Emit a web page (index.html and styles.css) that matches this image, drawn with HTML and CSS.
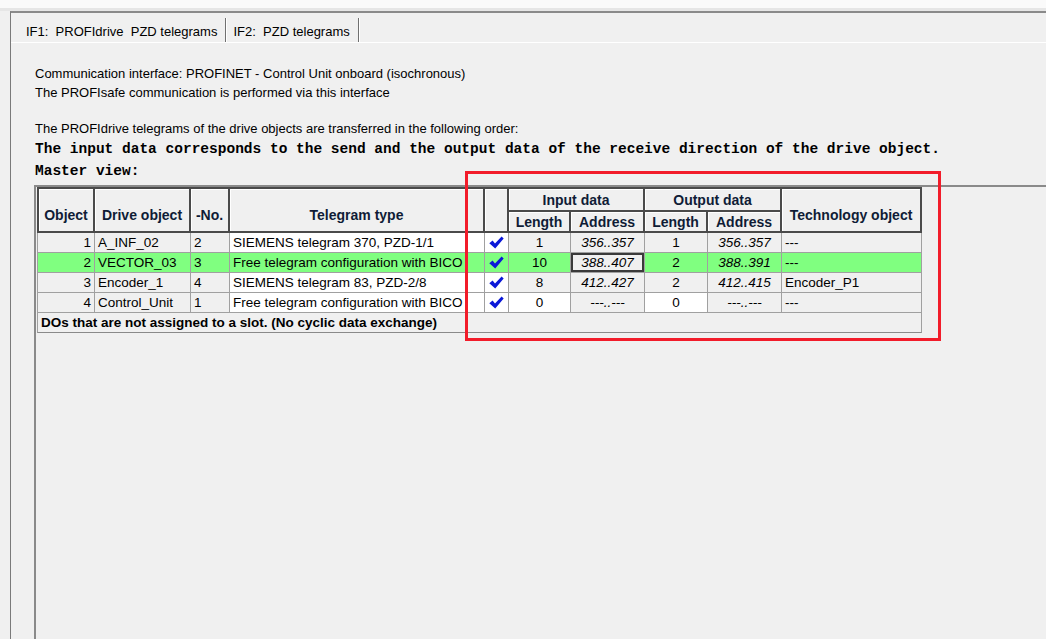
FILE: index.html
```html
<!DOCTYPE html>
<html lang="en">
<head>
<meta charset="utf-8">
<title>PROFIdrive PZD telegrams</title>
<link rel="stylesheet" href="styles.css">
</head>
<body>
<div class="topstrip"></div>
<div class="tabctl">
  <div class="tabs">
    <div class="tab tab-active">IF1:&nbsp; PROFIdrive&nbsp; PZD telegrams</div>
    <div class="tab">IF2:&nbsp; PZD telegrams</div>
  </div>
  <div class="panel">
    <div class="info">
      <p>Communication interface: PROFINET - Control Unit onboard (isochronous)</p>
      <p>The PROFIsafe communication is performed via this interface</p>
    </div>
    <p class="order">The PROFIdrive telegrams of the drive objects are transferred in the following order:</p>
    <p class="mono">The input data corresponds to the send and the output data of the receive direction of the drive object.</p>
    <p class="mono">Master view:</p>
    <div class="grid">
      <table class="tg">
        <colgroup>
          <col class="c-obj"><col class="c-drv"><col class="c-no"><col class="c-tel"><col class="c-chk">
          <col class="c-len"><col class="c-adr"><col class="c-len2"><col class="c-adr"><col class="c-tech">
        </colgroup>
        <thead>
          <tr class="h1">
            <th rowspan="2" class="first">Object</th>
            <th rowspan="2">Drive object</th>
            <th rowspan="2">-No.</th>
            <th rowspan="2">Telegram type</th>
            <th rowspan="2"></th>
            <th colspan="2">Input data</th>
            <th colspan="2">Output data</th>
            <th rowspan="2">Technology object</th>
          </tr>
          <tr class="h2">
            <th>Length</th><th>Address</th><th>Length</th><th>Address</th>
          </tr>
        </thead>
        <tbody>
          <tr>
            <td class="num first">1</td><td>A_INF_02</td><td>2</td><td class="w">SIEMENS telegram 370, PZD-1/1</td>
            <td class="chk w"><svg class="tick" viewBox="0 0 15 13"><path d="M0.3 7.2 L3.6 4.6 L6 7.4 L12.6 0.4 L14.7 2.5 L6.2 12.6 Z"/></svg></td>
            <td class="ctr">1</td><td class="adr">356..357</td><td class="ctr">1</td><td class="adr">356..357</td><td>---</td>
          </tr>
          <tr class="sel">
            <td class="num first">2</td><td>VECTOR_03</td><td>3</td><td>Free telegram configuration with BICO</td>
            <td class="chk"><svg class="tick" viewBox="0 0 15 13"><path d="M0.3 7.2 L3.6 4.6 L6 7.4 L12.6 0.4 L14.7 2.5 L6.2 12.6 Z"/></svg></td>
            <td class="ctr">10</td><td class="adr focus">388..407</td><td class="ctr">2</td><td class="adr">388..391</td><td>---</td>
          </tr>
          <tr>
            <td class="num first">3</td><td>Encoder_1</td><td>4</td><td class="w">SIEMENS telegram 83, PZD-2/8</td>
            <td class="chk w"><svg class="tick" viewBox="0 0 15 13"><path d="M0.3 7.2 L3.6 4.6 L6 7.4 L12.6 0.4 L14.7 2.5 L6.2 12.6 Z"/></svg></td>
            <td class="ctr">8</td><td class="adr">412..427</td><td class="ctr">2</td><td class="adr">412..415</td><td>Encoder_P1</td>
          </tr>
          <tr>
            <td class="num first">4</td><td>Control_Unit</td><td>1</td><td class="w">Free telegram configuration with BICO</td>
            <td class="chk w"><svg class="tick" viewBox="0 0 15 13"><path d="M0.3 7.2 L3.6 4.6 L6 7.4 L12.6 0.4 L14.7 2.5 L6.2 12.6 Z"/></svg></td>
            <td class="ctr w">0</td><td class="adr">---..---</td><td class="ctr w">0</td><td class="adr">---..---</td><td>---</td>
          </tr>
          <tr class="unassigned">
            <td colspan="10" class="first">DOs that are not assigned to a slot. (No cyclic data exchange)</td>
          </tr>
        </tbody>
      </table>
    </div>
  </div>
</div>
<div class="mark"></div>
</body>
</html>
```

FILE: styles.css
```css
html, body {
  margin: 0;
  padding: 0;
  height: 100%;
}
body {
  position: relative;
  background: #f0f0f0;
  font-family: "Liberation Sans", Arial, sans-serif;
  font-size: 13px;
  color: #000;
  overflow: hidden;
  display: flex;
  flex-direction: column;
}
p { margin: 0; }

.topstrip {
  height: 8px;
  background: #fafafa;
  border-bottom: 3px solid #e6e6e6;
  flex: none;
}

.tabctl {
  flex: 1;
  display: flex;
  flex-direction: column;
  margin-left: 10px;
  border-top: 2px solid #8a8a8a;
  border-left: 1px solid #7a7a7a;
  min-height: 0;
}

.tabs {
  display: flex;
  height: 29px;
  align-items: flex-end;
  padding-left: 13px;
  flex: none;
}
.tab {
  height: 24px;
  line-height: 28px;
  padding: 0 8px 0 2px;
  border-right: 1px solid #707070;
  box-shadow: 1px 0 0 #ffffff;
  white-space: nowrap;
  margin-right: 5px;
}

.panel {
  flex: 1;
  display: flex;
  flex-direction: column;
  border-top: 1px solid #ffffff;
  padding-left: 24px;
  min-height: 0;
}

.info {
  padding-top: 21px;
  line-height: 19px;
}
.order {
  margin-top: 17px;
  line-height: 19px;
}
.mono {
  font-family: "Liberation Mono", "Courier New", monospace;
  font-weight: bold;
  font-size: 14.5px;
  line-height: 22px;
  white-space: nowrap;
}

.grid {
  flex: 1;
  margin-top: 3px;
  margin-left: -1px;
  border-top: 2px solid #8a8a8a;
  border-left: 2px solid #8a8a8a;
  background: #f0f0f0;
}

.tg {
  border-collapse: separate;
  border-spacing: 0;
  table-layout: fixed;
  width: 885px;
  margin-left: 1px;
  font-size: 13.5px;
}
.c-obj { width: 58px; }
.c-drv { width: 96px; }
.c-no { width: 39px; }
.c-tel { width: 255px; }
.c-chk { width: 24px; }
.c-len { width: 62px; }
.c-len2 { width: 63px; }
.c-adr { width: 74px; }
.c-tech { width: 140px; }

.tg th {
  font-weight: bold;
  font-size: 14px;
  color: #0f1c36;
  background: #f0f0f0;
  border-right: 2px solid #4a4a4a;
  border-bottom: 2px solid #4a4a4a;
  box-shadow: inset 1px 1px 0 #ffffff;
  padding: 0 2px;
  white-space: nowrap;
  overflow: hidden;
}
.tg .h1 th {
  border-top: 2px solid #4a4a4a;
  height: 20px;
  padding-top: 1px;
}
.tg .h1 th[rowspan] { padding-top: 9px; }
.tg .h2 th {
  height: 19px;
}
.tg th.first { border-left: 2px solid #4a4a4a; }

.tg td {
  height: 19px;
  line-height: 19px;
  padding: 0 3px;
  border-right: 1px solid #a0a0a0;
  border-bottom: 1px solid #a0a0a0;
  background: #f0f0f0;
  white-space: nowrap;
  overflow: hidden;
}
.tg td.first { border-left: 1px solid #a0a0a0; }
.tg td.w { background: #ffffff; }
.tg td.num { text-align: right; }
.tg td.ctr { text-align: center; }
.tg td.adr { text-align: center; font-style: italic; }
.tg td.chk { text-align: center; padding: 0; }
.tick {
  width: 15px;
  height: 13px;
  vertical-align: -2px;
  fill: #0b18d8;
}
.tg tr.sel td { background: #80ff80; }
.tg tr.sel td.focus {
  background: #f0f0f0;
  box-shadow: inset 0 0 0 2px #3a3a3a;
}
.tg tr.unassigned td {
  font-weight: bold;
  background: #f0f0f0;
  border-bottom: 1px solid #8a8a8a;
}

.mark {
  position: absolute;
  left: 465px;
  top: 171px;
  width: 470px;
  height: 164px;
  border: 3px solid #f21c2a;
}
```
